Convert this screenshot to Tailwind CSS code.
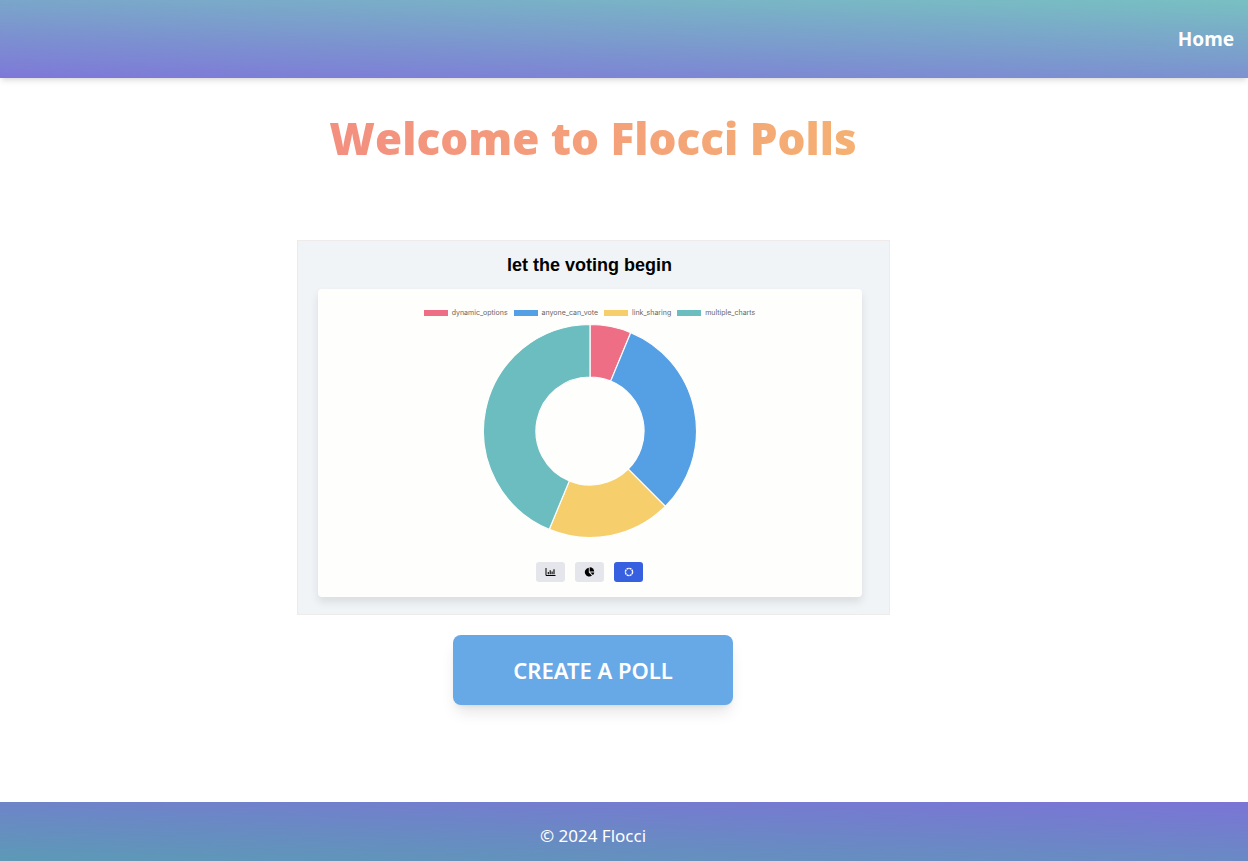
<!DOCTYPE html>
<html lang="en">
<head>
<meta charset="utf-8">
<meta name="viewport" content="width=device-width, initial-scale=1">
<title>Flocci Polls</title>
<script src="https://cdn.jsdelivr.net/npm/@tailwindcss/browser@4"></script>
</head>
<body class="flex min-h-screen flex-col bg-white font-['Noto_Sans','Open_Sans',sans-serif]">
<header class="flex h-[78px] items-center justify-end bg-[linear-gradient(2deg,#7e78d8,#78c0c2)] px-[14px] shadow-md">
  <nav><a href="#" class="text-[19px] leading-7 font-bold text-white">Home</a></nav>
</header>

<main class="flex flex-1 flex-col items-center pr-[62px]">
  <h1 class="mt-6 bg-linear-to-r from-[#f38f80] to-[#f5b072] bg-clip-text font-['Open_Sans',sans-serif] text-[44px] leading-[72px] font-extrabold text-transparent">Welcome to Flocci Polls</h1>

  <section aria-label="Example poll" class="mt-[66px] flex w-1/2 flex-col border border-[#eeebea] border-l-[#f8e6df] bg-[#f1f4f6] pr-[27px] pb-[17px] pl-5 font-['Liberation_Sans',sans-serif]">
    <h2 class="py-2 text-center text-lg leading-8 font-bold text-black">let the voting begin</h2>
    <div class="flex flex-col items-center rounded bg-[#fefefc] pt-5 pb-[15px] shadow-[0_5px_9px_#00000018]">
      <ul class="flex h-2 items-center gap-[6px] font-['Inter',sans-serif] text-[7px] leading-2 text-[#666]">
        <li class="flex items-center gap-1"><span class="h-[6px] w-6 bg-[#ee6e86]"></span>dynamic_options</li>
        <li class="flex items-center gap-1"><span class="h-[6px] w-6 bg-[#559fe5]"></span>anyone_can_vote</li>
        <li class="flex items-center gap-1"><span class="h-[6px] w-6 bg-[#f6cf6c]"></span>link_sharing</li>
        <li class="flex items-center gap-1"><span class="h-[6px] w-6 bg-[#6cbdbf]"></span>multiple_charts</li>
      </ul>
      <svg class="mt-[6px] size-[216px]" viewBox="-108 -108 216 216" role="img" aria-label="Doughnut chart of the votes" stroke="#fefefc" stroke-width="1.2">
        <path fill="#ee6e86" d="M0-106.5A106.5 106.5 0 0 1 40.8-98.4L20.7-49.9A54 54 0 0 0 0-54Z"/>
        <path fill="#559fe5" d="M40.8-98.4A106.5 106.5 0 0 1 75.3 75.3L38.2 38.2A54 54 0 0 0 20.7-49.9Z"/>
        <path fill="#f6cf6c" d="M75.3 75.3A106.5 106.5 0 0 1-40.8 98.4L-20.7 49.9A54 54 0 0 0 38.2 38.2Z"/>
        <path fill="#6cbdbf" d="M-40.8 98.4A106.5 106.5 0 0 1 0-106.5V-54A54 54 0 0 0-20.7 49.9Z"/>
      </svg>
      <div class="mt-[23px] flex gap-[10px]">
        <button type="button" aria-label="Bar chart" class="flex h-5 w-[29px] items-center justify-center rounded-[3px] bg-[#e4e6eb] text-black">
          <svg class="h-[10px] w-[11px]" viewBox="0 0 11 10" fill="none" stroke="currentColor"><path stroke-width="1" d="M1 1v7.5h9.5"/><path stroke-width="1.1" d="M3.3 7.3V5M5.2 7.3V3.2M7.1 7.3V4.4M9 7.3V2.2"/></svg>
        </button>
        <button type="button" aria-label="Pie chart" class="flex h-5 w-[29px] items-center justify-center rounded-[3px] bg-[#e4e6eb] text-black">
          <svg class="h-[10px] w-[11px]" viewBox="0 0 11 10" fill="currentColor"><path d="M4.8.8V5.4L8 8.6A4.4 4.4 0 1 1 4.8.8Z"/><path d="M5.7.2A4.4 4.4 0 0 1 10.2 4.6H5.7Z"/><path d="M6.3 5.4H10.3A4.4 4.4 0 0 1 8.9 8.1Z"/></svg>
        </button>
        <button type="button" aria-label="Doughnut chart" aria-pressed="true" class="flex h-5 w-[29px] items-center justify-center rounded-[3px] bg-[#3660e0] text-white">
          <svg class="size-[10px]" viewBox="0 0 10 10" fill="none" stroke="currentColor"><circle cx="5" cy="5" r="3.6" stroke-width="1.4" stroke-dasharray="2.3 .5"/></svg>
        </button>
      </div>
    </div>
  </section>

  <button type="button" class="mt-5 h-[70px] w-[280px] rounded-lg bg-[#67a8e7] text-[22px] leading-8 font-semibold text-white shadow-lg">CREATE A POLL</button>
</main>

<footer class="flex h-[59px] items-center justify-center bg-[linear-gradient(182deg,#7b74d6,#5c9ab6)] pt-2 pr-[62px] text-[17px] leading-6 text-white">
  <p>© 2024 Flocci</p>
</footer>
</body>
</html>
